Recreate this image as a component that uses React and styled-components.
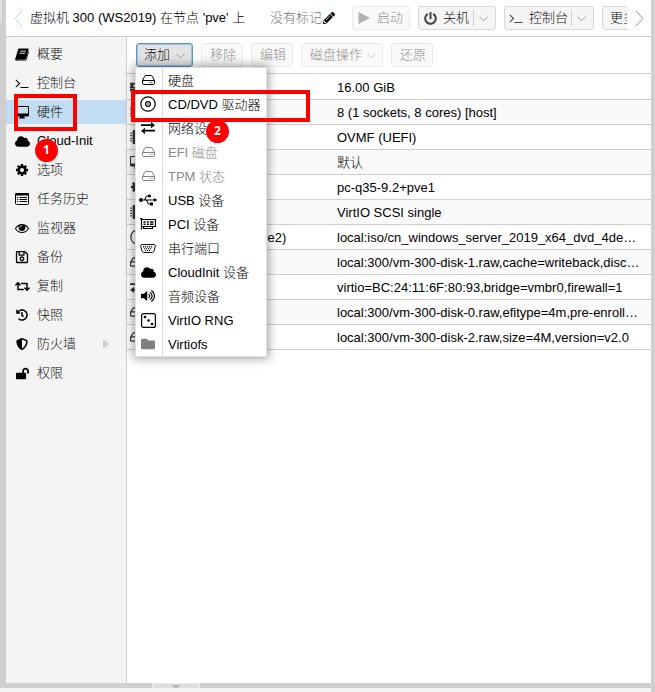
import React from 'react';
import styled, { createGlobalStyle } from 'styled-components';
import {
    FaCloud, FaRegSave, FaRetweet, FaHistory, FaShieldAlt, FaLockOpen,
    FaPowerOff, FaPencilAlt, FaUsb, FaVolumeUp, FaFolder, FaRegHdd, FaMemory, FaMicrochip,
} from 'react-icons/fa';

const GlobalStyle = createGlobalStyle`
    * {
        box-sizing: border-box;
    }
    body {
        margin: 0;
        background: #f4f4f4;
        font-family: "Liberation Sans", "Noto Sans CJK SC", sans-serif;
        font-size: 13px;
        font-weight: 300;
        line-height: 16px;
        color: #000;
    }
    svg {
        display: block;
        flex: none;
    }
`;

const Page = styled.div`
    position: relative;
    display: flex;
    width: 655px;
    height: 692px;
    overflow: hidden;
    white-space: nowrap;
`;

const LeftEdge = styled.div`
    width: 6px;
    height: 688px;
    background: #cfcfcf;
`;

const LeftHandle = styled.div`
    width: 2px;
    height: 23px;
    background: #dedede;
`;

const RightEdge = styled.div`
    width: 4px;
    background: #cfcfcf;
`;

const Center = styled.div`
    display: flex;
    flex-direction: column;
    width: 645px;
`;

const TitleBar = styled.div`
    display: flex;
    align-items: center;
    height: 37px;
    padding: 0 7px 0 8px;
    background: #fff;
    border-bottom: 1px solid #cfcfcf;
`;

const Title = styled.div`
    flex: none;
    width: 240px;
    margin-left: 7px;
    color: #000;
`;

const Tags = styled.div`
    display: flex;
    flex: none;
    align-items: center;
    gap: 1px;
    width: 82px;
    color: #777;
    svg {
        color: #000;
    }
`;

const TitleButtons = styled.div`
    display: flex;
    flex: none;
    gap: 8px;
    width: 275px;
    margin-right: 8px;
    overflow: hidden;
`;

const Button = styled.button`
    display: flex;
    align-items: center;
    flex: none;
    width: ${(p) => p.$width}px;
    height: 24px;
    padding: 0 0 0 ${(p) => p.$pad || 7}px;
    border: 1px solid ${(p) => (p.$active ? '#5a9bd4' : '#d8d8d8')};
    border-radius: 3px;
    background: ${(p) => (p.$active ? '#e3e3e3' : '#f5f5f5')};
    box-shadow: ${(p) => (p.$active ? 'inset 0 0 0 1px #9fc4e2' : 'none')};
    font: inherit;
    color: #111;
    opacity: ${(p) => (p.disabled ? 0.5 : 1)};
    svg {
        color: #444;
    }
`;

const Label = styled.span`
    flex: 1;
    padding-left: ${(p) => p.$gap || 0}px;
    text-align: left;
    line-height: 22px;
`;

const Arrow = styled.span`
    display: flex;
    align-items: center;
    justify-content: center;
    width: 22px;
    height: 16px;
    padding-right: 2px;
    border-left: 1px solid ${(p) => (p.$split ? '#cfcfcf' : 'transparent')};
`;

const Body = styled.div`
    display: flex;
    height: 646px;
`;

const SideNav = styled.nav`
    display: flex;
    flex-direction: column;
    gap: 5px;
    width: 121px;
    padding-top: 5px;
    background: #f4f4f4;
    border-right: 1px solid #cfcfcf;
`;

const NavItem = styled.div`
    display: flex;
    align-items: center;
    height: 24px;
    padding: 0 17px 0 9px;
    background: ${(p) => (p.$selected ? '#c2ddf2' : 'transparent')};
    color: ${(p) => (p.$dark ? '#000' : '#111')};
    svg {
        color: #000;
    }
`;

const NavIcon = styled.span`
    display: flex;
    justify-content: center;
    width: 14px;
    margin-right: 8px;
`;

const NavText = styled.span`
    flex: 1;
`;

const Expand = styled.span`
    border: 5px solid transparent;
    border-left: 6px solid #cfcfcf;
    border-right: 0;
`;

const Main = styled.main`
    width: 524px;
    background: #fff;
`;

const Toolbar = styled.div`
    display: flex;
    align-items: center;
    gap: 8px;
    height: 37px;
    padding-left: 9px;
    border-bottom: 1px solid #cfcfcf;
`;

const Row = styled.div`
    display: flex;
    align-items: center;
    height: 25px;
    border-bottom: 1px solid #cfcfcf;
    background: ${(p) => (p.$alt ? '#fafafa' : '#fff')};
    &:first-child {
        height: 26px;
    }
`;

const RowIcon = styled.span`
    width: 16px;
    margin-left: 3px;
    color: #333;
`;

const RowName = styled.span`
    width: 191px;
    padding: 2px 0 0 11px;
`;

const RowValue = styled.span`
    padding-top: 2px;
`;

const BottomEdge = styled.div`
    display: flex;
    height: 5px;
    padding-left: 146px;
    background: #cfcfcf;
`;

const BottomHandle = styled.div`
    display: flex;
    justify-content: center;
    width: 48px;
    padding-top: 1px;
    background: #dedede;
    border: 1px solid #ebebeb;
    border-bottom: 0;
`;

const Menu = styled.div`
    position: absolute;
    left: 135px;
    top: 67px;
    width: 132px;
    height: 290px;
    border: 1px solid #e0e0e0;
    background: linear-gradient(to right, #fff 26px, #dcdcdc 26px, #dcdcdc 27px, #fff 27px);
    box-shadow: 0 0 9px 2px rgba(0, 0, 0, 0.35);
`;

const MenuItem = styled.div`
    display: flex;
    align-items: center;
    height: 24px;
    color: ${(p) => (p.$off ? '#8a8a8a' : '#000')};
    svg {
        color: ${(p) => (p.$off ? '#808080' : '#000')};
    }
`;

const MenuIcon = styled.span`
    display: flex;
    justify-content: center;
    width: 24px;
    margin-right: 8px;
`;

const MenuText = styled.span`
    padding-top: 2px;
`;

const Mark = styled.div`
    position: absolute;
    left: ${(p) => p.$x}px;
    top: ${(p) => p.$y}px;
    width: ${(p) => p.$w}px;
    height: ${(p) => p.$h}px;
    border: 4px solid #fe0000;
`;

const Step = styled.div`
    position: absolute;
    left: ${(p) => p.$x}px;
    top: ${(p) => p.$y}px;
    width: 23px;
    height: 23px;
    border-radius: 50%;
    background: #fe0000;
    color: #fff;
    font: bold 12px/22px "Open Sans", sans-serif;
    text-align: center;
`;

const Chevron = ({ size = 9, color = '#999' }) => (
    <svg width={size} height={size} viewBox="0 0 10 10" fill="none" stroke={color} strokeWidth="1.1">
        <path d="M.5 3L5 7.5 9.5 3" />
    </svg>
);

const Scroller = ({ left }) => (
    <svg width="9" height="17" viewBox="0 0 9 17" fill="none" stroke={left ? '#ccc' : '#999'} strokeWidth="1">
        <path d={left ? 'M8 1L1 8.5 8 16' : 'M1 1l7 7.5L1 16'} />
    </svg>
);

const Terminal = ({ size = 14 }) => (
    <svg width={size} height={size} viewBox="0 0 1792 1792" fill="currentColor">
        <path d="M649 983l-466 466q-10 10-23 10t-23-10l-50-50q-10-10-10-23t10-23l393-393-393-393q-10-10-10-23t10-23l50-50q10-10 23-10t23 10l466 466q10 10 10 23t-10 23zm1079 457v64q0 14-9 23t-23 9h-960q-14 0-23-9t-9-23v-64q0-14 9-23t23-9h960q14 0 23 9t9 23z" />
    </svg>
);

const Book = () => (
    <svg width="14" height="13" viewBox="0 0 14 13">
        <path d="M4.5.5h8.1c.8 0 1.2.5 1 1.2l-2.5 8.8c-.2.8-.8 1.2-1.6 1.2H2.2c-.5 0-.9.2-.8.6H10c.6 0 .9-.2 1-.7L13.6 3c.4.3.4.7.3 1.2l-2.3 7.5c-.2.7-.8 1.1-1.6 1.1H1.8C.7 12.8 0 11.9.2 10.9L3 1.7C3.2.9 3.8.5 4.5.5z" fill="currentColor" />
        <path d="M5.3 3.2h5.5M4.7 5.3h5.5" stroke="#f4f4f4" strokeWidth=".9" />
    </svg>
);

const Desktop = () => (
    <svg width="14" height="13" viewBox="0 0 14 13" fill="currentColor">
        <path fillRule="evenodd" d="M1.2 0h11.6c.7 0 1.2.5 1.2 1.2v8c0 .7-.5 1.2-1.2 1.2H9l.4 1.2c.5 0 .6.3.6.6v.3H4v-.3c0-.3.1-.6.6-.6L5 10.4H1.2C.5 10.4 0 9.9 0 9.2v-8C0 .5.5 0 1.2 0zM1 1v6.5h12V1z" />
    </svg>
);

const Cog = ({ size = 14 }) => (
    <svg width={size} height={size} viewBox="0 0 1792 1792" fill="currentColor">
        <path d="M1152 896q0-106-75-181t-181-75-181 75-75 181 75 181 181 75 181-75 75-181zm512-109v222q0 12-8 23t-20 13l-185 28q-19 54-39 91 35 50 107 138 10 12 10 25t-9 23q-27 37-99 108t-94 71q-12 0-26-9l-138-108q-44 23-91 38-16 136-29 186-7 28-36 28h-222q-14 0-24.5-8.5t-11.5-21.5l-28-184q-49-16-90-37l-141 107q-10 9-25 9-14 0-25-11-126-114-165-168-7-10-7-23 0-12 8-23 15-21 51-66.5t54-70.5q-27-50-41-99l-183-27q-13-2-21-12.5t-8-23.5v-222q0-12 8-23t19-13l186-28q14-46 39-92-40-57-107-138-10-12-10-24 0-10 9-23 26-36 98.5-107.5t94.5-71.5q13 0 26 10l138 107q44-23 91-38 16-136 29-186 7-28 36-28h222q14 0 24.5 8.5t11.5 21.5l28 184q49 16 90 37l142-107q9-9 24-9 13 0 25 10 129 119 165 170 7 8 7 22 0 12-8 23-15 21-51 66.5t-54 70.5q26 50 41 98l183 28q13 2 21 12.5t8 23.5z" />
    </svg>
);

const TaskList = () => (
    <svg width="14" height="12" viewBox="0 0 14 12" fill="none" stroke="currentColor">
        <rect x=".5" y=".5" width="13" height="11" rx="1" />
        <path d="M0 1.5h14" strokeWidth="2" />
        <path d="M2 4.5h1.2M2 6.5h1.2M2 8.5h1.2M4.5 4.5H12M4.5 6.5H12M4.5 8.5H12" />
    </svg>
);

const Eye = () => (
    <svg width="14" height="14" viewBox="0 0 1792 1792" fill="currentColor">
        <path d="M1664 960q-152-236-381-353 61 104 61 225 0 185-131.5 316.5t-316.5 131.5-316.5-131.5-131.5-316.5q0-121 61-225-229 117-381 353 133 205 333.5 326.5t434.5 121.5 434.5-121.5 333.5-326.5zm-720-384q0-20-14-34t-34-14q-125 0-214.5 89.5t-89.5 214.5q0 20 14 34t34 14 34-14 14-34q0-86 61-147t147-61q20 0 34-14t14-34zm848 384q0 34-20 69-140 230-376.5 368.5t-499.5 138.5-499.5-139-376.5-368q-20-35-20-69t20-69q140-229 376.5-368t499.5-139 499.5 139 376.5 368q20 35 20 69z" />
    </svg>
);

const Play = () => (
    <svg width="12" height="12" viewBox="0 0 12 12">
        <path d="M.5 0L12 6 .5 12z" fill="#666" />
    </svg>
);

const Drive = () => (
    <svg width="13" height="10" viewBox="0 0 13 10" fill="none" stroke="currentColor">
        <path d="M.5 5.5l2.300-4.300c.2-.5.400-.7.900-.7h5.600c.5 0 .7.200.9.700l2.300 4.300v3c0 .7-.3 1-1 1h-10c-.7 0-1-.3-1-1zM.5 5.500h12" />
        <path d="M7.500 7.500h1M9.500 7.500h1" />
    </svg>
);

const Disc = () => (
    <svg width="16" height="16" viewBox="0 0 16 16" fill="none" stroke="currentColor">
        <circle cx="8" cy="8" r="7.2" strokeWidth="1.2" />
        <circle cx="8" cy="8" r="2.4" strokeWidth="1.2" />
        <circle cx="8" cy="8" r=".7" fill="currentColor" stroke="none" />
    </svg>
);

const Exchange = () => (
    <svg width="14" height="12" viewBox="0 0 14 12" fill="currentColor">
        <path d="M0 2.3h10V0l4 3.2-4 3.1V4H0zM14 7.7H4V5.8L0 9l4 3V9.600h10z" />
    </svg>
);

const Card = () => (
    <svg width="16" height="12" viewBox="0 0 16 12" fill="none" stroke="currentColor">
        <path d="M0 .6h1.500v11" strokeWidth="1.2" />
        <path d="M1.500 1.500h14v7h-14M3.500 8.500v2h9v-2" strokeWidth="1.2" />
        <path d="M3.500 4h2M6.800 4h2M10 4h3.500M3.500 6.200h2M6.800 6.200h2M10 6.200h3.500" strokeWidth="1.5" />
    </svg>
);

const Serial = () => (
    <svg width="16" height="9" viewBox="0 0 16 10" fill="none" stroke="currentColor" preserveAspectRatio="none">
        <path d="M2 .6h12c1 0 1.6.7 1.3 1.7l-1.4 5.5c-.3 1.1-.8 1.6-1.9 1.6H4c-1.100 0-1.600-.5-1.900-1.600L.7 2.300C.4 1.300 1 .6 2 .6z" />
        <path d="M3 3.200h10M4 5.200h8M5 7.200h6" strokeDasharray="1.2 .8" strokeWidth="1.2" />
    </svg>
);

const Dice = () => (
    <svg width="15" height="15" viewBox="0 0 15 15" fill="currentColor">
        <rect x=".6" y=".6" width="13.8" height="13.8" rx="2" fill="none" stroke="currentColor" strokeWidth="1.2" />
        <circle cx="4" cy="4" r="1.3" />
        <circle cx="7.5" cy="7.5" r="1.3" />
        <circle cx="11" cy="11" r="1.3" />
    </svg>
);

const navItems = [
    { icon: <Book />, text: '概要' },
    { icon: <Terminal />, text: '控制台' },
    { icon: <Desktop />, text: '硬件', selected: true },
    { icon: <FaCloud size={15} />, text: 'Cloud-Init', dark: true },
    { icon: <Cog />, text: '选项' },
    { icon: <TaskList />, text: '任务历史' },
    { icon: <Eye />, text: '监视器' },
    { icon: <FaRegSave size={14} />, text: '备份' },
    { icon: <FaRetweet size={15} />, text: '复制' },
    { icon: <FaHistory size={12} />, text: '快照' },
    { icon: <FaShieldAlt size={12} />, text: '防火墙', expand: true },
    { icon: <FaLockOpen size={13} />, text: '权限' },
];

const menuItems = [
    { icon: <Drive />, text: '硬盘' },
    { icon: <Disc />, text: 'CD/DVD 驱动器' },
    { icon: <Exchange />, text: '网络设备' },
    { icon: <Drive />, text: 'EFI 磁盘', off: true },
    { icon: <Drive />, text: 'TPM 状态', off: true },
    { icon: <FaUsb size={18} />, text: 'USB 设备' },
    { icon: <Card />, text: 'PCI 设备' },
    { icon: <Serial />, text: '串行端口' },
    { icon: <FaCloud size={15} />, text: 'CloudInit 设备' },
    { icon: <FaVolumeUp size={14} />, text: '音频设备' },
    { icon: <Dice />, text: 'VirtIO RNG' },
    { icon: <FaFolder size={14} style={{ color: '#808080' }} />, text: 'Virtiofs' },
];

const hardware = [
    { icon: <FaMemory size={14} />, name: '内存', value: '16.00 GiB' },
    { icon: <FaMicrochip size={14} />, name: '处理器', value: '8 (1 sockets, 8 cores) [host]' },
    { icon: <FaMicrochip size={14} />, name: 'BIOS', value: 'OVMF (UEFI)' },
    { icon: <Desktop />, name: '显示', value: '默认' },
    { icon: <Cog />, name: '机型', value: 'pc-q35-9.2+pve1' },
    { icon: <FaMicrochip size={14} />, name: 'SCSI', value: 'VirtIO SCSI single' },
    { icon: <Disc />, name: 'CD/DVD 驱动器 (ide2)', value: 'local:iso/cn_windows_server_2019_x64_dvd_4de…' },
    { icon: <FaRegHdd size={14} />, name: '硬盘', value: 'local:300/vm-300-disk-1.raw,cache=writeback,disc…' },
    { icon: <Exchange />, name: '网络设备', value: 'virtio=BC:24:11:6F:80:93,bridge=vmbr0,firewall=1' },
    { icon: <FaRegHdd size={14} />, name: 'EFI 磁盘', value: 'local:300/vm-300-disk-0.raw,efitype=4m,pre-enroll…' },
    { icon: <FaRegHdd size={14} />, name: 'TPM 状态', value: 'local:300/vm-300-disk-2.raw,size=4M,version=v2.0' },
];

function App() {
    return (
        <>
            <GlobalStyle />
            <Page>
                <LeftEdge>
                    <LeftHandle />
                </LeftEdge>
                <Center>
                    <TitleBar>
                        <Scroller left />
                        <Title>虚拟机 300 (WS2019) 在节点 'pve' 上</Title>
                        <Tags>
                            没有标记
                            <FaPencilAlt size={12} />
                        </Tags>
                        <TitleButtons>
                            <Button $width={58} $pad={5} disabled>
                                <Play />
                                <Label $gap={7}>启动</Label>
                            </Button>
                            <Button $width={78} $pad={5}>
                                <FaPowerOff size={13} />
                                <Label $gap={6}>关机</Label>
                                <Arrow $split><Chevron /></Arrow>
                            </Button>
                            <Button $width={90} $pad={4}>
                                <Terminal />
                                <Label $gap={6}>控制台</Label>
                                <Arrow $split><Chevron /></Arrow>
                            </Button>
                            <Button $width={60}>
                                <Label>更多</Label>
                            </Button>
                        </TitleButtons>
                        <Scroller />
                    </TitleBar>
                    <Body>
                        <SideNav>
                            {navItems.map((item) => (
                                <NavItem key={item.text} $selected={item.selected} $dark={item.dark}>
                                    <NavIcon>{item.icon}</NavIcon>
                                    <NavText>{item.text}</NavText>
                                    {item.expand && <Expand />}
                                </NavItem>
                            ))}
                        </SideNav>
                        <Main>
                            <Toolbar>
                                <Button $width={57} $active>
                                    <Label>添加</Label>
                                    <Arrow><Chevron /></Arrow>
                                </Button>
                                <Button $width={42} $pad={8} disabled><Label>移除</Label></Button>
                                <Button $width={42} $pad={8} disabled><Label>编辑</Label></Button>
                                <Button $width={82} $pad={8} disabled>
                                    <Label>磁盘操作</Label>
                                    <Arrow><Chevron /></Arrow>
                                </Button>
                                <Button $width={42} $pad={8} disabled><Label>还原</Label></Button>
                            </Toolbar>
                            <div>
                                {hardware.map((row, i) => (
                                    <Row key={row.value} $alt={i % 2 === 1}>
                                        <RowIcon>{row.icon}</RowIcon>
                                        <RowName>{row.name}</RowName>
                                        <RowValue>{row.value}</RowValue>
                                    </Row>
                                ))}
                            </div>
                        </Main>
                    </Body>
                    <BottomEdge>
                        <BottomHandle>
                            <svg width="10" height="3" viewBox="0 0 10 3"><path d="M0 0h10L6.5 3h-3z" fill="#b8b8b8" /></svg>
                        </BottomHandle>
                    </BottomEdge>
                </Center>
                <RightEdge />

                <Menu>
                    {menuItems.map((item) => (
                        <MenuItem key={item.text} $off={item.off}>
                            <MenuIcon>{item.icon}</MenuIcon>
                            <MenuText>{item.text}</MenuText>
                        </MenuItem>
                    ))}
                </Menu>

                <Mark $x={14} $y={94} $w={63} $h={37} />
                <Mark $x={131} $y={90} $w={179} $h={32} />
                <Step $x={35} $y={139}>1</Step>
                <Step $x={206} $y={120}>2</Step>
            </Page>
        </>
    );
}

export default App;
